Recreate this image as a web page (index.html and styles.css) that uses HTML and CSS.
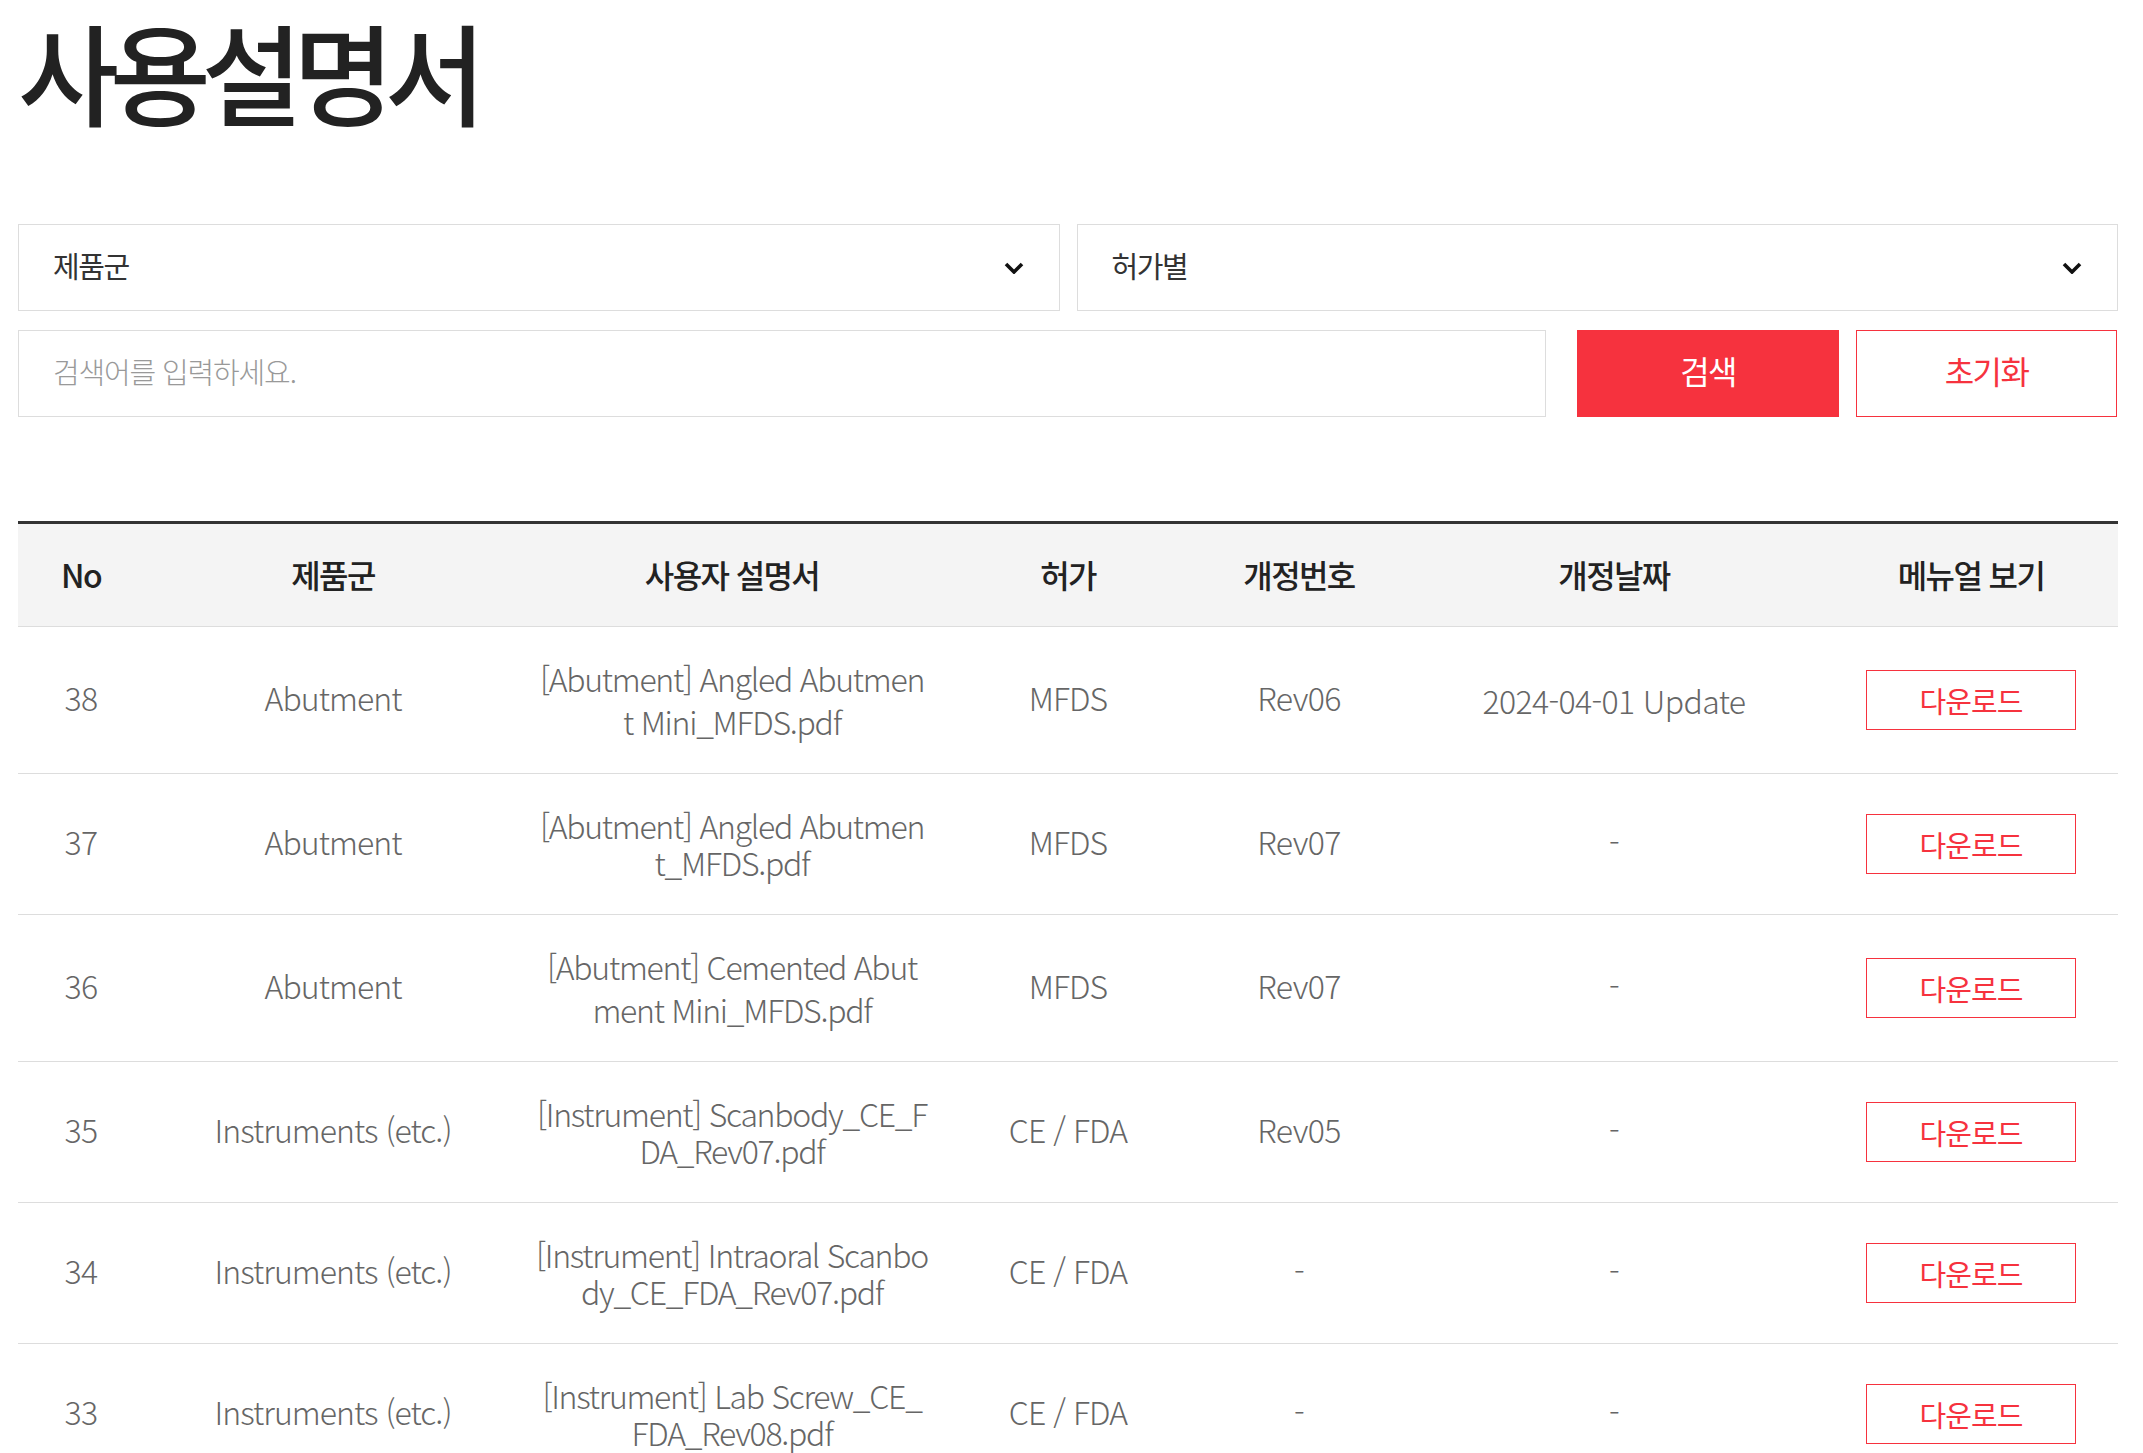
FILE: index.html
```html
<!DOCTYPE html>
<html lang="ko">
<head>
<meta charset="utf-8">
<title>사용설명서</title>
<link rel="stylesheet" href="styles.css">
</head>
<body>
<div class="page">
  <h1 class="title">사용설명서</h1>

  <form class="filters">
    <div class="select-row">
      <div class="select">
        <span>제품군</span>
        <svg class="chev" viewBox="0 0 20 12" width="20" height="12"><polyline points="2,2 10,10 18,2" fill="none" stroke="#111" stroke-width="3.6"/></svg>
      </div>
      <div class="select">
        <span>허가별</span>
        <svg class="chev" viewBox="0 0 20 12" width="20" height="12"><polyline points="2,2 10,10 18,2" fill="none" stroke="#111" stroke-width="3.6"/></svg>
      </div>
    </div>
    <div class="search-row">
      <input class="search-input" type="text" placeholder="검색어를 입력하세요.">
      <button type="button" class="btn btn-search">검색</button>
      <button type="button" class="btn btn-reset">초기화</button>
    </div>
  </form>

  <table class="manuals">
    <colgroup>
      <col class="c-no"><col class="c-group"><col class="c-file"><col class="c-cert"><col class="c-rev"><col class="c-date"><col class="c-view">
    </colgroup>
    <thead>
      <tr>
        <th>No</th><th>제품군</th><th>사용자 설명서</th><th>허가</th><th>개정번호</th><th>개정날짜</th><th>메뉴얼 보기</th>
      </tr>
    </thead>
    <tbody>
      <tr>
        <td class="num">38</td><td>Abutment</td><td class="file loose">[Abutment] Angled Abutmen<br>t Mini_MFDS.pdf</td><td>MFDS</td><td class="num">Rev06</td><td class="num date">2024-04-01 Update</td>
        <td><a class="dl" href="#">다운로드</a></td>
      </tr>
      <tr>
        <td class="num">37</td><td>Abutment</td><td class="file">[Abutment] Angled Abutmen<br>t_MFDS.pdf</td><td>MFDS</td><td class="num">Rev07</td><td class="num">-</td>
        <td><a class="dl" href="#">다운로드</a></td>
      </tr>
      <tr>
        <td class="num">36</td><td>Abutment</td><td class="file loose">[Abutment] Cemented Abut<br>ment Mini_MFDS.pdf</td><td>MFDS</td><td class="num">Rev07</td><td class="num">-</td>
        <td><a class="dl" href="#">다운로드</a></td>
      </tr>
      <tr>
        <td class="num">35</td><td>Instruments (etc.)</td><td class="file">[Instrument] Scanbody_CE_F<br>DA_Rev07.pdf</td><td>CE / FDA</td><td class="num">Rev05</td><td class="num">-</td>
        <td><a class="dl" href="#">다운로드</a></td>
      </tr>
      <tr>
        <td class="num">34</td><td>Instruments (etc.)</td><td class="file">[Instrument] Intraoral Scanbo<br>dy_CE_FDA_Rev07.pdf</td><td>CE / FDA</td><td class="num">-</td><td class="num">-</td>
        <td><a class="dl" href="#">다운로드</a></td>
      </tr>
      <tr>
        <td class="num">33</td><td>Instruments (etc.)</td><td class="file">[Instrument] Lab Screw_CE_<br>FDA_Rev08.pdf</td><td>CE / FDA</td><td class="num">-</td><td class="num">-</td>
        <td><a class="dl" href="#">다운로드</a></td>
      </tr>
    </tbody>
  </table>
</div>
</body>
</html>
```

FILE: styles.css
```css
* { box-sizing: border-box; }

html, body {
  margin: 0;
  background: #fff;
}

body {
  font-family: "Noto Sans CJK KR", "Noto Sans", sans-serif;
  color: #222;
}

.page {
  width: 2100px;
  margin-left: 18px;
}

.title {
  margin: 0;
  font-size: 110px;
  line-height: 140px;
  font-weight: 500;
  letter-spacing: -9.5px;
  color: #222;
}

.filters {
  margin-top: 84px;
  display: flex;
  flex-direction: column;
  gap: 19px;
}

.select-row {
  display: flex;
  gap: 17px;
}

.select {
  flex: 1;
  height: 87px;
  border: 1px solid #ddd;
  display: flex;
  align-items: center;
  justify-content: space-between;
  padding: 0 35px 5px 34px;
  font-size: 29px;
  font-weight: 400;
  letter-spacing: -0.05em;
  color: #333;
}

.chev {
  display: block;
  margin-top: 5px;
}

.search-row {
  display: flex;
  height: 87px;
}

.search-input {
  width: 1528px;
  height: 100%;
  border: 1px solid #ddd;
  padding: 0 34px 6px;
  margin: 0;
  font-family: inherit;
  font-size: 29px;
  font-weight: 300;
  letter-spacing: -0.04em;
  color: #333;
  outline: none;
}

.search-input::placeholder { color: #999; }

.btn {
  height: 100%;
  margin: 0;
  padding: 0 0 7px;
  font-family: inherit;
  font-size: 32px;
  font-weight: 400;
  letter-spacing: -0.05em;
  cursor: pointer;
}

.btn-search {
  width: 262px;
  margin-left: 31px;
  background: #f6323e;
  border: 1px solid #f6323e;
  color: #fff;
}

.btn-reset {
  width: 261px;
  margin-left: 17px;
  background: #fff;
  border: 1px solid #f6323e;
  color: #f6323e;
}

.manuals {
  margin-top: 104px;
  width: 100%;
  table-layout: fixed;
  border-collapse: collapse;
  border-top: 3px solid #333;
}

.c-no { width: 6%; }
.c-group { width: 18%; }
.c-file { width: 20%; }
.c-cert { width: 12%; }
.c-rev { width: 10%; }
.c-date { width: 20%; }
.c-view { width: 14%; }

.manuals th {
  height: 104px;
  background: #f4f4f4;
  border-bottom: 1px solid #ddd;
  font-size: 32px;
  font-weight: 500;
  letter-spacing: -0.05em;
  color: #222;
  text-align: center;
  padding: 0 0 3px;
}

.manuals td {
  height: 141px;
  padding: 27px 14px 33px;
  border-bottom: 1px solid #ddd;
  text-align: center;
  vertical-align: middle;
  font-size: 32px;
  font-weight: 300;
  line-height: 37px;
  letter-spacing: -0.03em;
  color: #666;
}

.manuals td.num { letter-spacing: -0.02em; }

.manuals td.date { padding-top: 33px; }

.manuals td.file {
  padding: 30px 10px;
  white-space: nowrap;
  letter-spacing: -0.04em;
}

.manuals td.loose { line-height: 43px; }

.dl {
  display: inline-flex;
  align-items: center;
  justify-content: center;
  width: 210px;
  height: 60px;
  margin-top: 6px;
  border: 1px solid #f6323e;
  color: #f6323e;
  text-decoration: none;
  font-size: 29px;
  font-weight: 400;
  letter-spacing: -0.03em;
}
```
